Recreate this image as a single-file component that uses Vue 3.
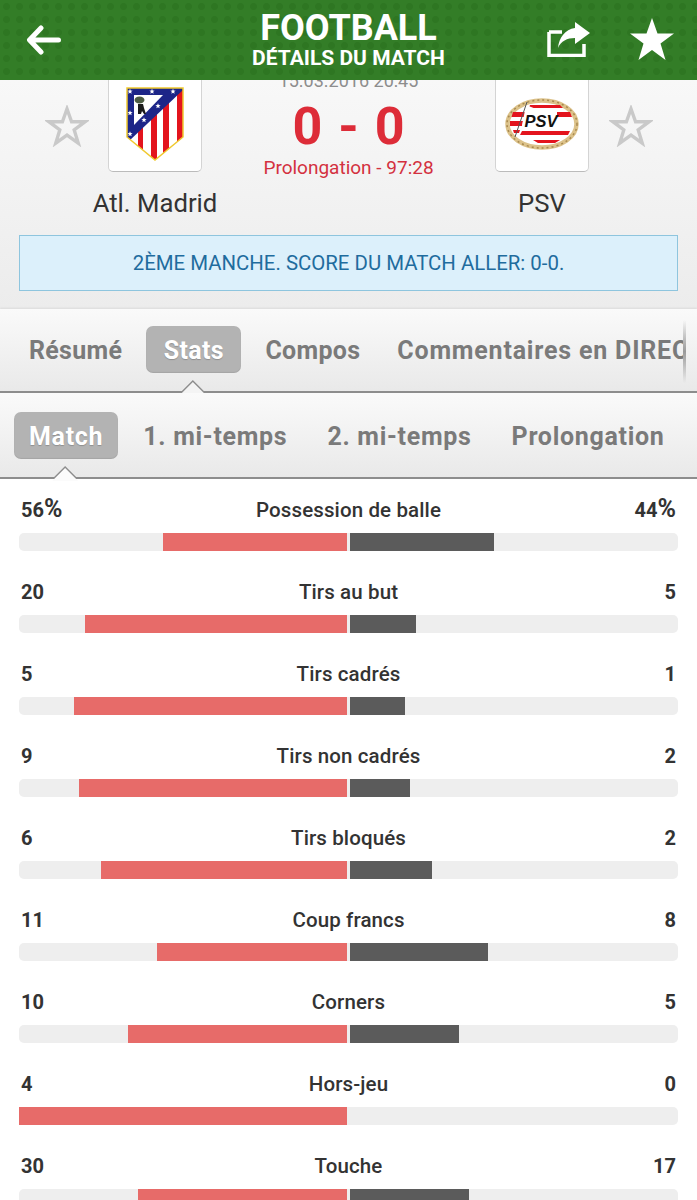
<template>
  <div class="screen">
    <header class="top-bar">
      <button class="icon-btn">
        <svg width="36" height="30" viewBox="0 0 36 30"><path d="M32.500 15H4M15 3 3.500 15 15 27" fill="none" stroke="#fff" stroke-width="5" stroke-linecap="round" stroke-linejoin="round"/></svg>
      </button>
      <div class="title">
        <div class="title-main">FOOTBALL</div>
        <div class="title-sub">DÉTAILS DU MATCH</div>
      </div>
      <div class="top-actions">
        <svg width="44" height="36" viewBox="0 0 44 36"><path d="M2 11H15M2 11V34.500H37V23" fill="none" stroke="#fff" stroke-width="3.500"/><path d="M28 1 43 12 28 23V17C20 17 14 20 11 27 12 17 18 8 28 7Z" fill="#fff"/></svg>
        <svg width="46" height="44" viewBox="0 0 46 44"><path d="M23 1 28.500 16.500H45L31.500 26.500 36.500 43 23 33 9.500 43 14.500 26.500 1 16.500H17.500Z" fill="#fff"/></svg>
      </div>
    </header>

    <section class="hero">
      <div class="match-grid">
        <svg class="fav fav-left" width="44" height="42" viewBox="0 0 46 44"><path d="M23 4 27.800 17.500H42L30.500 26 34.800 40 23 31.500 11.200 40 15.500 26 4 17.500H18.200Z" fill="none" stroke="#c9c9c9" stroke-width="3.500"/></svg>
        <div class="crest-card">
          <svg width="58" height="74" viewBox="0 0 58 74">
            <defs>
              <clipPath id="atl-shield"><path d="M1 1H57V50L29 73 1 50Z"/></clipPath>
            </defs>
            <path d="M1 1H57V50L29 73 1 50Z" fill="#fff"/>
            <g clip-path="url(#atl-shield)">
              <path d="M12 30h5v45h-5zM25 20h6v55h-6zM37 10h6v65h-6zM51 0h6v75h-6z" fill="#e3141d"/>
              <path d="M0 0H58V2L3 54 0 52Z" fill="#1c2588"/>
              <path d="M8 8H37L8 38Z" fill="#fff"/>
              <path d="M12 17h5l1 4 2 6h-2l-2-3-1 3h-3Z" fill="#1b1b1b"/>
              <ellipse cx="13.500" cy="13" rx="5" ry="3.500" fill="#4c5b42"/>
              <polygon v-for="p in atlStars" :key="p[0] + '-' + p[1]" :points="starPoints(p[0], p[1])" fill="#fff"/>
            </g>
            <path d="M1 1H57V50L29 73 1 50Z" fill="none" stroke="#f0c92e" stroke-width="1.500"/>
          </svg>
        </div>
        <div class="score-col">
          <div class="kickoff">15.03.2016 20:45</div>
          <div class="score">0 - 0</div>
          <div class="period">Prolongation - 97:28</div>
        </div>
        <div class="crest-card">
          <svg width="74" height="52" viewBox="0 0 74 52">
            <ellipse cx="37" cy="26" rx="34.500" ry="23.500" fill="#fff" stroke="#dcc28a" stroke-width="4.500"/>
            <ellipse cx="37" cy="26" rx="35" ry="24" fill="none" stroke="#a8894f" stroke-width="1.500" stroke-dasharray="2 3"/>
            <path d="M25 7H55L58 10H24ZM52 14H65L67 19H52ZM8 14H22L20 19H6.500ZM5 23H18L17 28H5ZM8 32H15L14 35H9ZM17 33H65L63 37H15ZM28 42H55L50 45H33Z" fill="#e3141d"/>
            <path d="M21 7 69 26 16 33Z" fill="#fff"/>
            <path d="M22 4 10 39" stroke="#555" stroke-width="1"/>
            <text x="36" y="29" class="psv-mark" text-anchor="middle">PSV</text>
          </svg>
        </div>
        <svg class="fav fav-right" width="44" height="42" viewBox="0 0 46 44"><path d="M23 4 27.800 17.500H42L30.500 26 34.800 40 23 31.500 11.200 40 15.500 26 4 17.500H18.200Z" fill="none" stroke="#c9c9c9" stroke-width="3.500"/></svg>
        <div class="team-name name-home">Atl. Madrid</div>
        <div class="team-name name-away">PSV</div>
      </div>
      <div class="leg-info">2ÈME MANCHE. SCORE DU MATCH ALLER: 0-0.</div>
    </section>

    <nav class="tabs tabs-main">
      <div class="tabs-scroll">
        <span v-for="t in mainTabs" :key="t" class="tab" :class="{ active: t === 'Stats' }">{{ t }}</span>
      </div>
      <div class="scroll-edge"></div>
    </nav>

    <nav class="tabs tabs-sub">
      <div class="tabs-scroll">
        <span v-for="t in subTabs" :key="t" class="tab" :class="{ active: t === 'Match' }">{{ t }}</span>
      </div>
    </nav>

    <section class="stats">
      <div v-for="s in stats" :key="s.label" class="stat">
        <div class="stat-head">
          <span class="val">{{ s.home }}<span v-if="s.unit" class="unit">{{ s.unit }}</span></span>
          <span class="label">{{ s.label }}</span>
          <span class="val">{{ s.away }}<span v-if="s.unit" class="unit">{{ s.unit }}</span></span>
        </div>
        <div class="bar">
          <div class="half half-home"><div class="fill fill-home" :style="{ width: pct(s.home, s) }"></div></div>
          <div class="half half-away"><div class="fill fill-away" :style="{ width: pct(s.away, s) }"></div></div>
        </div>
      </div>
    </section>
  </div>
</template>

<script setup>
const mainTabs = ['Résumé', 'Stats', 'Compos', 'Commentaires en DIRECT']
const subTabs = ['Match', '1. mi-temps', '2. mi-temps', 'Prolongation']

const stats = [
  { label: 'Possession de balle', home: 56, away: 44, unit: '%' },
  { label: 'Tirs au but', home: 20, away: 5, unit: '' },
  { label: 'Tirs cadrés', home: 5, away: 1, unit: '' },
  { label: 'Tirs non cadrés', home: 9, away: 2, unit: '' },
  { label: 'Tirs bloqués', home: 6, away: 2, unit: '' },
  { label: 'Coup francs', home: 11, away: 8, unit: '' },
  { label: 'Corners', home: 10, away: 5, unit: '' },
  { label: 'Hors-jeu', home: 4, away: 0, unit: '' },
  { label: 'Touche', home: 30, away: 17, unit: '' }
]

// little stars on the blue band of the crest
const atlStars = [[4, 4.500], [26, 4.500], [47, 4.500], [4, 26], [32, 19], [18, 33], [4, 47]]

function starPoints(cx, cy) {
  const pts = []
  for (let i = 0; i < 10; i++) {
    const r = i % 2 ? 1.200 : 2.800
    const a = (Math.PI / 5) * i - Math.PI / 2
    pts.push((cx + r * Math.cos(a)).toFixed(2) + ',' + (cy + r * Math.sin(a)).toFixed(2))
  }
  return pts.join(' ')
}

function pct(value, s) {
  return (value / (s.home + s.away)) * 100 + '%'
}
</script>

<style>
html, body {
  margin: 0;
  overflow: hidden;
  background: #fff;
}
</style>

<style scoped>
.screen {
  width: 697px;
  height: 1200px;
  overflow: hidden;
  font-family: Roboto, "Liberation Sans", sans-serif;
  background: #fff;
  color: #333;
}

.top-bar {
  position: relative;
  z-index: 2;
  height: 80px;
  display: flex;
  align-items: center;
  justify-content: space-between;
  padding: 0 22px 0 26px;
  color: #fff;
  background-color: #337d27;
  background-image: radial-gradient(circle, #2e7622 3px, transparent 4px);
  background-size: 13px 13px;
}

.icon-btn {
  width: 36px;
  height: 30px;
  padding: 0;
  margin-top: -1px;
  border: 0;
  background: none;
}

.title {
  position: absolute;
  left: 0;
  right: 0;
  top: 10px;
  text-align: center;
}

.title-main {
  font-size: 36px;
  line-height: 37px;
  font-weight: 700;
}

.title-sub {
  font-size: 21px;
  line-height: 23px;
  font-weight: 700;
}

.top-actions {
  display: flex;
  align-items: center;
  gap: 38px;
  margin-top: -2px;
}

.hero {
  height: 229px;
  overflow: hidden;
  background: linear-gradient(#f8f8f8, #ececec);
  box-sizing: border-box;
}

.match-grid {
  display: grid;
  grid-template-columns: 108px 94px 1fr 94px 108px;
  grid-template-rows: 92px 60px;
  align-items: start;
}

.fav {
  align-self: center;
}

.fav-left {
  justify-self: end;
  margin-right: 19px;
}

.fav-right {
  justify-self: start;
  margin-left: 20px;
}

.crest-card {
  height: 92px;
  box-sizing: border-box;
  display: flex;
  align-items: center;
  justify-content: center;
  padding-bottom: 4px;
  background: #fff;
  border: 1px solid #d4d4d4;
  border-top: 0;
  border-bottom-color: #bbb;
  border-radius: 0 0 5px 5px;
}

.psv-mark {
  font-family: "Liberation Sans", sans-serif;
  font-size: 16.500px;
  font-weight: 700;
  font-style: italic;
  fill: #111;
}

.score-col {
  text-align: center;
  margin-top: -9px;
}

.kickoff {
  font-size: 18px;
  line-height: 20px;
  color: #8d8d8d;
}

.score {
  font-size: 52px;
  line-height: 54px;
  margin-top: 9px;
  font-weight: 700;
  color: #dd2c38;
  word-spacing: 3px;
}

.period {
  font-size: 19px;
  line-height: 24px;
  margin-top: 2px;
  color: #d3313f;
}

.team-name {
  grid-row: 2;
  justify-self: center;
  white-space: nowrap;
  font-size: 25.700px;
  line-height: 30px;
  margin-top: 16px;
  color: #333;
}

.name-home {
  grid-column: 2;
}

.name-away {
  grid-column: 4;
}

.leg-info {
  margin: 3px 19px 0;
  height: 56px;
  box-sizing: border-box;
  display: flex;
  align-items: center;
  justify-content: center;
  font-size: 20.400px;
  color: #1f6c9e;
  background: #dcf0fb;
  border: 1px solid #8ec5de;
}

.tabs {
  position: relative;
  box-sizing: border-box;
  display: flex;
  background: linear-gradient(#fafafa, #e9e9e9);
  border-bottom: 2px solid #8d8d8d;
}

.tabs-main {
  height: 84px;
  padding-top: 17px;
  box-shadow: 0 -1px 2px rgba(0, 0, 0, 0.08);
}

.tabs-sub {
  height: 86px;
  padding-top: 19px;
}

.tabs-scroll {
  display: flex;
  align-items: flex-start;
  overflow-x: clip;
  overflow-y: visible;
  white-space: nowrap;
  width: 683px;
  padding-left: 14px;
  box-sizing: border-box;
  gap: 10px;
}

.tabs-main .tabs-scroll {
  gap: 9px;
}

.tab {
  flex: none;
  height: 47px;
  line-height: 50px;
  padding: 0 15px;
  box-sizing: border-box;
  font-size: 25px;
  letter-spacing: 0.700px;
  font-weight: 700;
  color: #7a7a7a;
  border-radius: 7px;
  position: relative;
}

.tabs-main .tab {
  letter-spacing: 0.300px;
}

.tabs-main .tab.active {
  padding: 0 17.500px;
}

.tabs-main .tab:last-child {
  margin-left: -2px;
  letter-spacing: 0.800px;
}

.tab.active {
  color: #fff;
  background: #b3b3b3;
  box-shadow: inset 0 -1px 1px rgba(0, 0, 0, 0.08);
  text-shadow: 0 1px 1px rgba(0, 0, 0, 0.2);
}

/* notch of the tab line: a grey triangle with a lighter one on top */
.tab.active::before,
.tab.active::after {
  content: "";
  position: absolute;
  left: 50%;
  width: 26px;
  height: 13px;
  margin-left: -14px;
  clip-path: polygon(50% 0, 100% 100%, 0 100%);
}

.tab.active::before {
  top: 54px;
  background: #8d8d8d;
}

.tab.active::after {
  top: 56px;
  background: #f4f4f4;
}

.tabs-sub .tab.active::after {
  background: #fbfbfb;
}

.scroll-edge {
  position: absolute;
  left: 683px;
  top: 11px;
  bottom: 8px;
  width: 3px;
  background: linear-gradient(transparent, #9a9a9a 50%, transparent);
}

.stats {
  padding: 18px 19px 0;
}

.stat {
  margin-bottom: 28px;
}

.stat-head {
  display: flex;
  justify-content: space-between;
  align-items: center;
  height: 24px;
  box-sizing: border-box;
  margin-bottom: 12px;
  padding: 2px 2px 0;
  font-size: 20px;
}

.val {
  font-weight: 700;
  min-width: 42px;
  color: #333;
}

.val:last-child {
  text-align: right;
}

.unit {
  font-size: 25px;
  line-height: 20px;
}

.label {
  font-weight: 500;
  font-size: 20.500px;
  letter-spacing: 0.120px;
  color: #333;
}

.bar {
  display: flex;
  height: 18px;
  border-radius: 5px;
  background: #eeeeee;
  gap: 3px;
}

.half {
  flex: 1;
  display: flex;
}

.half-home {
  justify-content: flex-end;
}

.fill {
  height: 100%;
}

.fill-home {
  background: #e76b69;
}

.fill-away {
  background: #5b5b5b;
}
</style>
